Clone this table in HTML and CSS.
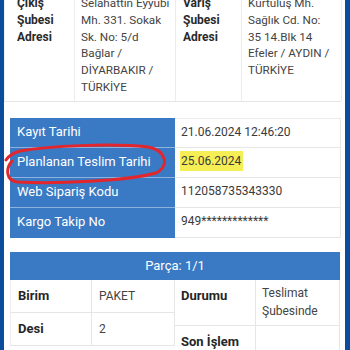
FILE: index.html
```html
<!DOCTYPE html>
<html lang="tr">
<head>
<meta charset="utf-8">
<link rel="stylesheet" href="styles.css">
</head>
<body>
<div class="page">
  <div class="addr">
    <div class="cell lbl">Çıkış Şubesi Adresi</div>
    <div class="cell val">Selahattin Eyyubi Mh. 331. Sokak Sk. No: 5/d Bağlar / DİYARBAKIR / TÜRKİYE</div>
    <div class="cell lbl">Varış Şubesi Adresi</div>
    <div class="cell val last">Kurtuluş Mh. Sağlık Cd. No: 35 14.Blk 14 Efeler / AYDIN / TÜRKİYE</div>
  </div>

  <div class="info">
    <div class="k">Kayıt Tarihi</div>
    <div class="v">21.06.2024 12:46:20</div>
    <div class="k">Planlanan Teslim Tarihi</div>
    <div class="v"><span class="hl">25.06.2024</span></div>
    <div class="k">Web Sipariş Kodu</div>
    <div class="v">112058735343330</div>
    <div class="k">Kargo Takip No</div>
    <div class="v">949*************</div>
  </div>

  <div class="part-head">Parça: 1/1</div>
  <div class="part">
    <div class="ptable left">
      <div class="pc pl">Birim</div>
      <div class="pc pv">PAKET</div>
      <div class="pc pl">Desi</div>
      <div class="pc pv">2</div>
    </div>
    <div class="ptable right">
      <div class="pc pl top">Durumu</div>
      <div class="pc pv top">Teslimat Şubesinde</div>
      <div class="pc pl top">Son İşlem</div>
      <div class="pc pv top"></div>
    </div>
  </div>

  <svg class="mark" viewBox="0 0 350 350" width="350" height="350" aria-hidden="true">
    <path d="M 6 160 C 9 155, 13 153, 20 151 C 50 146, 110 143, 148 147 C 166 150, 170 166, 156 173 C 128 181, 55 184, 18 182 C 5 181, 6 168, 12 161" fill="none" stroke="#e3252c" stroke-width="3" stroke-linecap="round" stroke-linejoin="round"/>
  </svg>
</div>
</body>
</html>
```

FILE: styles.css
```css
html, body {
  margin: 0;
  padding: 0;
  background: #ffffff;
}

.page {
  position: relative;
  box-sizing: border-box;
  width: 350px;
  height: 350px;
  overflow: hidden;
  border-left: 4px solid #0b4c9d;
  border-right: 5px solid #0b4c9d;
  background: #ffffff;
  font-family: Roboto, "Liberation Sans", Arial, sans-serif;
  color: #333333;
}

/* top address table (scrolled, cut at top) */
.addr {
  display: grid;
  grid-template-columns: 70px 101px 66px 100px;
  margin-top: -10px;
  border-left: 1px solid #efefef;
  border-bottom: 1px solid #e6e6e6;
  width: 337px;
  box-sizing: border-box;
}

.addr .cell {
  padding: 5px 1px 5px 6px;
  font-size: 12px;
  line-height: 16.8px;
  border-right: 1px solid #ececec;
}

.addr .lbl {
  font-weight: 700;
  color: #2a2a2a;
  padding-left: 12px;
}

.addr .cell.lbl:nth-child(3) {
  padding-left: 7px;
}

.addr .val {
  color: #444444;
  font-size: 11.7px;
}

.addr .val.last {
  padding-right: 7px;
}

/* blue key/value table */
.info {
  display: grid;
  grid-template-columns: 165px 166px;
  margin: 16px 0 0 6px;
  width: 331px;
}

.info .k {
  height: 30px;
  box-sizing: border-box;
  display: flex;
  align-items: center;
  padding: 0 0 2px 7px;
  background: #3a79c3;
  color: #ffffff;
  font-size: 13px;
  border-bottom: 1px solid #8eb2de;
}

.info .k:nth-last-child(2) {
  border-bottom-color: #3a79c3;
}

.info .v {
  height: 30px;
  box-sizing: border-box;
  display: flex;
  align-items: center;
  padding: 0 0 2px 6px;
  font-size: 12px;
  color: #3a3a3a;
  border-bottom: 1px solid #e6e6e6;
  border-right: 1px solid #e6e6e6;
}

.info .v:nth-child(2) {
  border-top: 1px solid #ececec;
}

.hl {
  background: #f5ee55;
  padding: 3px 2px 3px 1px;
  margin-left: -1px;
}

/* part header */
.part-head {
  margin: 14px 0 0 6px;
  width: 330px;
  height: 28px;
  background: #3a79c3;
  color: #ffffff;
  font-size: 13px;
  display: flex;
  align-items: center;
  justify-content: center;
}

.part {
  display: flex;
  margin-left: 6px;
  width: 330px;
}

.ptable {
  display: grid;
  align-content: start;
}

.ptable.left {
  width: 165px;
  grid-template-columns: 82px 83px;
}

.ptable.right {
  width: 165px;
  grid-template-columns: 81px 84px;
}

.pc {
  box-sizing: border-box;
  border-bottom: 1px solid #e6e6e6;
  border-right: 1px solid #e6e6e6;
  font-size: 12px;
  line-height: 18px;
  padding: 7px 6px 7px 7px;
  min-height: 33px;
  display: flex;
  align-items: center;
}

.ptable.left .pc:nth-child(odd) {
  border-left: 1px solid #ececec;
}

.pc.pl {
  font-weight: 700;
  font-size: 13px;
  color: #262626;
}

.pc.pv {
  color: #444444;
}

.pc.top {
  align-items: flex-start;
  padding: 7px 6px 5px 6px;
}

.pc.pv.top {
  padding-top: 4px;
}

.mark {
  position: absolute;
  left: -4px;
  top: 0;
  pointer-events: none;
}
```
